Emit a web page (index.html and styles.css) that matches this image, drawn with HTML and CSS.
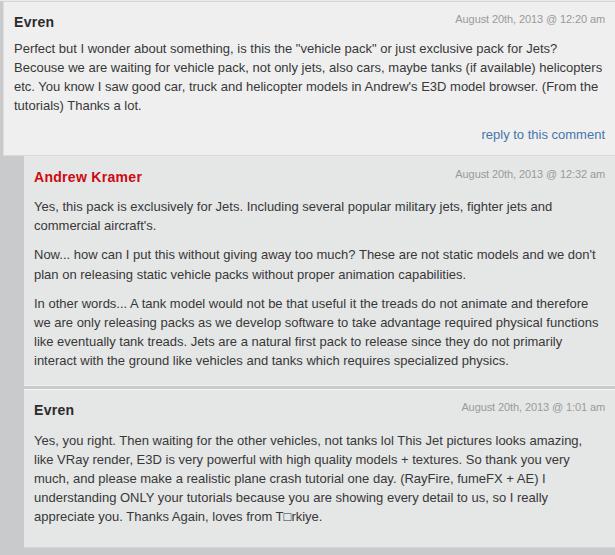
FILE: index.html
```html
<!DOCTYPE html>
<html>
<head>
<meta charset="utf-8">
<link rel="stylesheet" href="styles.css">
</head>
<body>
<div class="thread">
  <div class="comment first">
    <div class="head">
      <span class="name">Evren</span>
      <span class="date">August 20th, 2013 @ 12:20 am</span>
    </div>
    <div class="body">
      <p>Perfect but I wonder about something, is this the "vehicle pack" or just exclusive pack for Jets? Becouse we are waiting for vehicle pack, not only jets, also cars, maybe tanks (if available) helicopters etc. You know I saw good car, truck and helicopter models in Andrew's E3D model browser. (From the tutorials) Thanks a lot.</p>
    </div>
    <div class="reply"><a href="#">reply to this comment</a></div>
  </div>
  <div class="comment child author">
    <div class="head">
      <span class="name red">Andrew Kramer</span>
      <span class="date">August 20th, 2013 @ 12:32 am</span>
    </div>
    <div class="body">
      <p>Yes, this pack is exclusively for Jets. Including several popular military jets, fighter jets and commercial aircraft's.</p>
      <p>Now... how can I put this without giving away too much? These are not static models and we don't plan on releasing static vehicle packs without proper animation capabilities.</p>
      <p>In other words... A tank model would not be that useful it the treads do not animate and therefore we are only releasing packs as we develop software to take advantage required physical functions like eventually tank treads. Jets are a natural first pack to release since they do not primarily interact with the ground like vehicles and tanks which requires specialized physics.</p>
    </div>
  </div>
  <div class="comment child last">
    <div class="head">
      <span class="name">Evren</span>
      <span class="date">August 20th, 2013 @ 1:01 am</span>
    </div>
    <div class="body">
      <p>Yes, you right. Then waiting for the other vehicles, not tanks lol This Jet pictures looks amazing, like VRay render, E3D is very powerful with high quality models + textures. So thank you very much, and please make a realistic plane crash tutorial one day. (RayFire, fumeFX + AE) I understanding ONLY your tutorials because you are showing every detail to us, so I really appreciate you. Thanks Again, loves from T&#9633;rkiye.</p>
    </div>
  </div>
</div>
</body>
</html>
```
FILE: styles.css
```css
html, body {
  margin: 0;
  padding: 0;
}
body {
  background: #c9cacb;
  font-family: "Liberation Sans", Arial, sans-serif;
  color: #383838;
  width: 615px;
  height: 555px;
  overflow: hidden;
}
.thread {
  padding-top: 1px;
  background: linear-gradient(#e9e9e9, #e9e9e9) top / 100% 1px no-repeat, #c9cacb;
}
.comment {
  padding: 0 10px;
  box-sizing: border-box;
}
.first {
  margin-left: 3px;
  background: #efefef;
  border-top: 1px solid #d6d6d6;
  border-left: 1px solid #dedede;
  border-bottom: 1px solid #d9d9d9;
  height: 155px;
  padding-top: 12px;
}
.child {
  margin-left: 24px;
  background: #e5e6e6;
}
.author {
  height: 230px;
  padding-top: 13px;
  border-bottom: 1px solid #efefef;
}
.last {
  border-top: 1px solid #f6f6f6;
  border-bottom: 1px solid #d5d6d6;
  margin-top: 3px;
  padding-top: 12px;
  padding-bottom: 20px;
}
.head {
  display: flex;
  justify-content: space-between;
  align-items: flex-start;
}
.name {
  font-weight: bold;
  font-size: 14px;
  line-height: 16px;
  letter-spacing: 0.3px;
  color: #2b2b2b;
}
.name.red { color: #cc0a12; }
.date {
  font-size: 11px;
  line-height: 13px;
  margin-top: -1px;
  letter-spacing: -0.1px;
  color: #9a9a9a;
}
.body p {
  margin: 10px 0 0;
  font-size: 13px;
  line-height: 19.2px;
}
.first .body p:first-child { margin-top: 8.5px; }
.author .body p:first-child { margin-top: 12px; }
.last .body p:first-child { margin-top: 12.5px; }
.reply {
  text-align: right;
  margin-top: 8.5px;
  line-height: 19px;
}
.reply a {
  font-size: 13px;
  color: #4676ab;
  text-decoration: none;
}
```
